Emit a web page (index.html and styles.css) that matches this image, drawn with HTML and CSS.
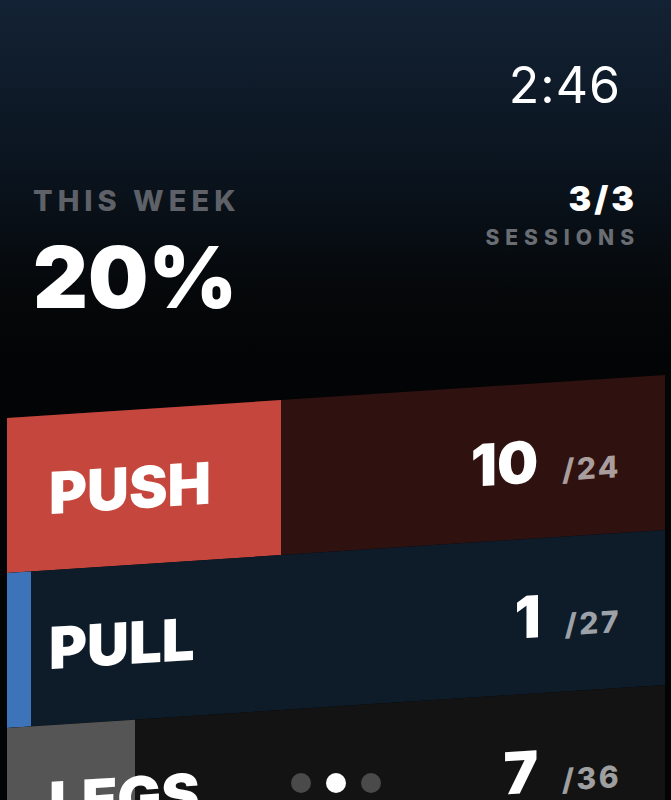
FILE: index.html
```html
<!DOCTYPE html>
<html lang="en">
<head>
    <meta charset="UTF-8">
    <meta name="viewport" content="width=device-width, initial-scale=1.0">
    <title>Weekly Progress</title>
    <link rel="stylesheet" href="styles.css">
</head>
<body>
    <div class="screen">
        <!-- Часы -->
        <div class="clock">2:46</div>

        <!-- Итоги недели -->
        <div class="summary">
            <div class="week">
                <div class="week-label">THIS WEEK</div>
                <div class="week-value">20%</div>
            </div>
            <div class="sessions">
                <div class="sessions-count">3/3</div>
                <div class="sessions-label">SESSIONS</div>
            </div>
        </div>

        <!-- Список групп упражнений (наклонный) -->
        <div class="rows">
            <div class="row row-push">
                <div class="row-fill" style="width: 41.67%"></div>
                <span class="row-label">PUSH</span>
                <span class="row-count">10<span class="row-total">/24</span></span>
            </div>
            <div class="row row-pull">
                <div class="row-fill" style="width: 3.7%"></div>
                <span class="row-label">PULL</span>
                <span class="row-count">1<span class="row-total">/27</span></span>
            </div>
            <div class="row row-legs">
                <div class="row-fill" style="width: 19.44%"></div>
                <span class="row-label">LEGS</span>
                <span class="row-count">7<span class="row-total">/36</span></span>
            </div>
        </div>

        <!-- Индикатор страниц -->
        <div class="pager">
            <span class="dot"></span>
            <span class="dot dot-active"></span>
            <span class="dot"></span>
        </div>
    </div>
</body>
</html>
```

FILE: styles.css
```css
/* Общий фон страницы */
body {
    margin: 0;
    padding: 0;
    background-color: #030406;
    font-family: Inter, "Liberation Sans", Arial, sans-serif;
    color: #fff;
}

/* Экран часов */
.screen {
    position: relative;
    height: 800px;
    overflow: hidden;
    background: linear-gradient(to bottom, #132234 0%, #0b1520 160px, #050709 300px, #030406 360px);
}

/* Время в правом верхнем углу */
.clock {
    padding: 60px 50px 0 0;
    text-align: right;
    font-size: 50px;
    font-weight: 400;
    line-height: 1;
    letter-spacing: 1px;
}

/* Блок итогов недели */
.summary {
    display: flex;
    justify-content: space-between;
    align-items: flex-start;
    margin-top: 72px;
    padding: 0 37px 0 33px;
}

.week {
    padding-top: 4px;
}

.week-label {
    font-size: 29px;
    font-weight: 800;
    line-height: 1;
    letter-spacing: 5px;
    color: #5e6167;
}

.week-value {
    margin-top: 20px;
    font-size: 85px;
    font-weight: 900;
    line-height: 1;
}

.sessions {
    text-align: right;
}

.sessions-count {
    font-size: 34px;
    font-weight: 900;
    line-height: 1;
    letter-spacing: 3px;
    margin-right: -3px;
}

.sessions-label {
    margin-top: 11px;
    margin-right: -6px;
    font-size: 21px;
    font-weight: 800;
    line-height: 1;
    letter-spacing: 6px;
    color: #6a6d72;
}

/* Наклонный список */
.rows {
    margin: 98px 0 0 7px;
    width: 658px;
    transform: skewY(-3.74deg);
    transform-origin: 0 0;
}

.row {
    position: relative;
    display: flex;
    justify-content: space-between;
    align-items: center;
    height: 155px;
    padding: 0 44px 0 42px;
}

/* Заполненная часть строки (прогресс) */
.row-fill {
    position: absolute;
    top: 0;
    left: 0;
    bottom: 0;
}

.row-label,
.row-count {
    position: relative;
    font-size: 58px;
    font-weight: 900;
    line-height: 1;
}

.row-total {
    margin-left: 24px;
    font-size: 30px;
    font-weight: 800;
    letter-spacing: 2.5px;
    color: rgba(255, 255, 255, 0.6);
}

.row-push {
    background-color: #2f1110;
}

.row-push .row-fill {
    background-color: #c4463c;
}

.row-pull {
    background-color: #0e1b29;
}

.row-pull .row-fill {
    background-color: #3d73b8;
}

.row-legs {
    background-color: #131313;
}

.row-legs .row-fill {
    background-color: #555555;
}

/* Точки страниц поверх списка */
.pager {
    position: absolute;
    left: 0;
    right: 0;
    bottom: 7px;
    display: flex;
    justify-content: center;
    gap: 15px;
}

.dot {
    width: 20px;
    height: 20px;
    border-radius: 50%;
    background-color: #4a4a4a;
}

.dot-active {
    background-color: #fff;
}
```
